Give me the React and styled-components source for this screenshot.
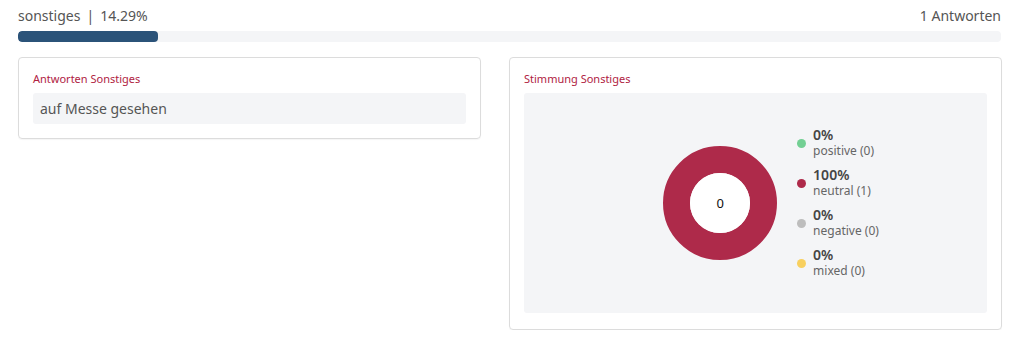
import React from 'react'
import styled, { createGlobalStyle } from 'styled-components'

const Global = createGlobalStyle`
  body {
    margin: 0;
    background: #fff;
    font-family: "Noto Sans", "Open Sans", sans-serif;
  }
`

const Page = styled.div`
  padding: 5px 23px 0 18px;
`

const Header = styled.div`
  display: flex;
  justify-content: space-between;
  align-items: center;
  height: 20px;
  font-size: 14px;
  color: #555;
`

const Sep = styled.span`
  margin: 0 6px;
`

const Track = styled.div`
  margin-top: 6px;
  height: 11px;
  border-radius: 4px;
  background: #f4f5f7;
  overflow: hidden;
`

const Fill = styled.div`
  height: 100%;
  border-radius: 4px;
  background: #2b5379;
`

const Cards = styled.div`
  display: grid;
  grid-template-columns: 463px 493px;
  gap: 28px;
  align-items: start;
  margin-top: 15px;
`

const Card = styled.div`
  border: 1px solid #dcdcdc;
  border-radius: 4px;
  padding: 14px 14px ${({ $tall }) => ($tall ? '16px' : '14px')} 14px;
  box-shadow: 0 1px 1px rgba(0, 0, 0, 0.04);
`

const Title = styled.div`
  font-size: 11px;
  color: #b0223f;
  line-height: 14px;
  margin-bottom: 7px;
`

const Answer = styled.div`
  background: #f4f5f7;
  border-radius: 3px;
  padding: 0 7px;
  height: 31px;
  display: flex;
  align-items: center;
  font-size: 14px;
  color: #555;
`

const ChartBox = styled.div`
  background: #f4f5f7;
  border-radius: 3px;
  height: 220px;
  display: flex;
  align-items: center;
  justify-content: center;
  gap: 20px;
  padding-left: 31px;
`

const Donut = styled.div`
  position: relative;
  width: 114px;
  height: 114px;
  display: flex;
  align-items: center;
  justify-content: center;
`

const Center = styled.span`
  position: absolute;
  font-size: 13px;
  color: #111;
`

const Legend = styled.div`
  display: flex;
  flex-direction: column;
  gap: 7px;
  margin-top: -2px;
`

const Item = styled.div`
  display: flex;
  align-items: center;
  gap: 7px;
`

const Dot = styled.span`
  width: 9px;
  height: 9px;
  border-radius: 50%;
  background: ${({ color }) => color};
  margin-top: 2px;
`

const Pct = styled.div`
  font-size: 14px;
  font-weight: 600;
  color: #444;
  line-height: 17px;
`

const Label = styled.div`
  font-size: 12px;
  color: #666;
  line-height: 16px;
`

const items = [
  { pct: '0%', label: 'positive (0)', color: '#72cf93' },
  { pct: '100%', label: 'neutral (1)', color: '#ae2a4a' },
  { pct: '0%', label: 'negative (0)', color: '#bdbdbd' },
  { pct: '0%', label: 'mixed (0)', color: '#f8d05f' },
]

const App = () => {
  return (
    <Page>
      <Global />
      <Header>
        <span>sonstiges<Sep>|</Sep>14.29%</span>
        <span>1 Antworten</span>
      </Header>
      <Track><Fill style={{ width: '14.29%' }} /></Track>
      <Cards>
        <Card>
          <Title>Antworten Sonstiges</Title>
          <Answer>auf Messe gesehen</Answer>
        </Card>
        <Card $tall>
          <Title>Stimmung Sonstiges</Title>
          <ChartBox>
            <Donut>
              <svg width="114" height="114" viewBox="0 0 114 114">
                <circle cx="57" cy="57" r="43.5" fill="none" stroke="#ae2a4a" strokeWidth="27" />
                <circle cx="57" cy="57" r="30" fill="#fff" />
              </svg>
              <Center>0</Center>
            </Donut>
            <Legend>
              {items.map((it) => (
                <Item key={it.label}>
                  <Dot color={it.color} />
                  <div>
                    <Pct>{it.pct}</Pct>
                    <Label>{it.label}</Label>
                  </div>
                </Item>
              ))}
            </Legend>
          </ChartBox>
        </Card>
      </Cards>
    </Page>
  )
}

export default App
